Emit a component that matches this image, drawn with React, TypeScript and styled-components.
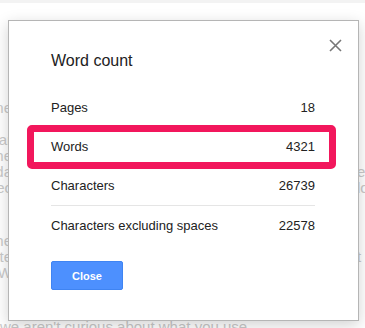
import React from "react";
import styled, { createGlobalStyle } from "styled-components";

const GlobalStyle = createGlobalStyle`
  html, body {
    margin: 0;
    padding: 0;
    background: #ffffff;
    overflow: hidden;
  }
  body {
    font-family: "Liberation Sans", Arial, sans-serif;
  }
`;

const Page = styled.div`
  position: relative;
  width: 365px;
  height: 328px;
  overflow: hidden;
  background: #ffffff;
  border-top: 3px solid #f3f3f3;
  box-sizing: border-box;
`;

// the document text that peeks out behind the dialog
const Doc = styled.div`
  display: flex;
  flex-direction: column;
  padding-top: 97px;
  font-size: 15px;
  color: #c9c9c9;
`;

const DocLine = styled.div<{ $gap?: number }>`
  display: flex;
  height: 16px;
  line-height: 16px;
  margin-top: ${({ $gap }) => $gap ?? 0}px;
  white-space: nowrap;
`;

const LeftBit = styled.span`
  display: flex;
  justify-content: flex-end;
  width: 12px;
`;

const RightBit = styled.span`
  margin-left: auto;
  width: 8px;
`;

const Dialog = styled.div`
  position: absolute;
  left: 8px;
  top: 17px;
  width: 351px;
  height: 301px;
  box-sizing: border-box;
  background: #ffffff;
  border: 1px solid #b5b5b5;
  box-shadow: 0 4px 14px rgba(0, 0, 0, 0.18);
  padding: 30px 43px 0 42px;
  display: flex;
  flex-direction: column;
`;

const CloseIcon = styled.button`
  position: absolute;
  top: 17px;
  right: 16px;
  width: 14px;
  height: 14px;
  padding: 0;
  border: 0;
  background: none;
  display: flex;
  align-items: center;
  justify-content: center;
`;

const Title = styled.h2`
  margin: 0 0 17px;
  font-size: 16px;
  line-height: 20px;
  font-weight: 400;
  color: #222222;
`;

const Row = styled.div<{ $divider?: boolean }>`
  position: relative;
  display: flex;
  align-items: center;
  justify-content: space-between;
  height: 39px;
  font-size: 13px;
  color: #222222;
  border-bottom: ${({ $divider }) => ($divider ? "1px solid #e5e5e5" : "none")};
`;

const Highlight = styled.div`
  position: absolute;
  left: -24px;
  right: -21px;
  top: -2px;
  bottom: -3px;
  border: 7px solid #f2175c;
  border-radius: 5px;
  pointer-events: none;
`;

const Button = styled.button`
  margin-top: 16px;
  width: 72px;
  height: 29px;
  background: #4d90fe;
  border: 1px solid #3f84f2;
  border-radius: 2px;
  color: #ffffff;
  font-family: "Liberation Sans", Arial, sans-serif;
  font-size: 11px;
  font-weight: 700;
  padding: 0;
`;

const docLines: { left: string; right?: string; gap?: number }[] = [
  { left: "one" },
  { left: "tar", gap: 16 },
  { left: "the" },
  { left: "da", right: "e" },
  { left: "rec", right: "lo" },
  { left: "the", gap: 37 },
  { left: "ate", right: "t" },
  { left: "W" },
];

const rows = [
  { label: "Pages", value: "18" },
  { label: "Words", value: "4321", marked: true },
  { label: "Characters", value: "26739", divider: true },
  { label: "Characters excluding spaces", value: "22578" },
];

export default function App() {
  return (
    <Page>
      <GlobalStyle />
      <Doc>
        {docLines.map((l, i) => (
          <DocLine key={i} $gap={l.gap}>
            <LeftBit>{l.left}</LeftBit>
            {l.right && <RightBit>{l.right}</RightBit>}
          </DocLine>
        ))}
        <DocLine $gap={38}>we aren't curious about what you use</DocLine>
      </Doc>
      <Dialog>
        <CloseIcon aria-label="Close">
          <svg width="13" height="13" viewBox="0 0 13 13">
            <path d="M1 1L12 12M12 1L1 12" stroke="#777" strokeWidth="1.6" />
          </svg>
        </CloseIcon>
        <Title>Word count</Title>
        {rows.map((r) => (
          <Row key={r.label} $divider={r.divider}>
            <span>{r.label}</span>
            <span>{r.value}</span>
            {r.marked && <Highlight />}
          </Row>
        ))}
        <Button>Close</Button>
      </Dialog>
    </Page>
  );
}
